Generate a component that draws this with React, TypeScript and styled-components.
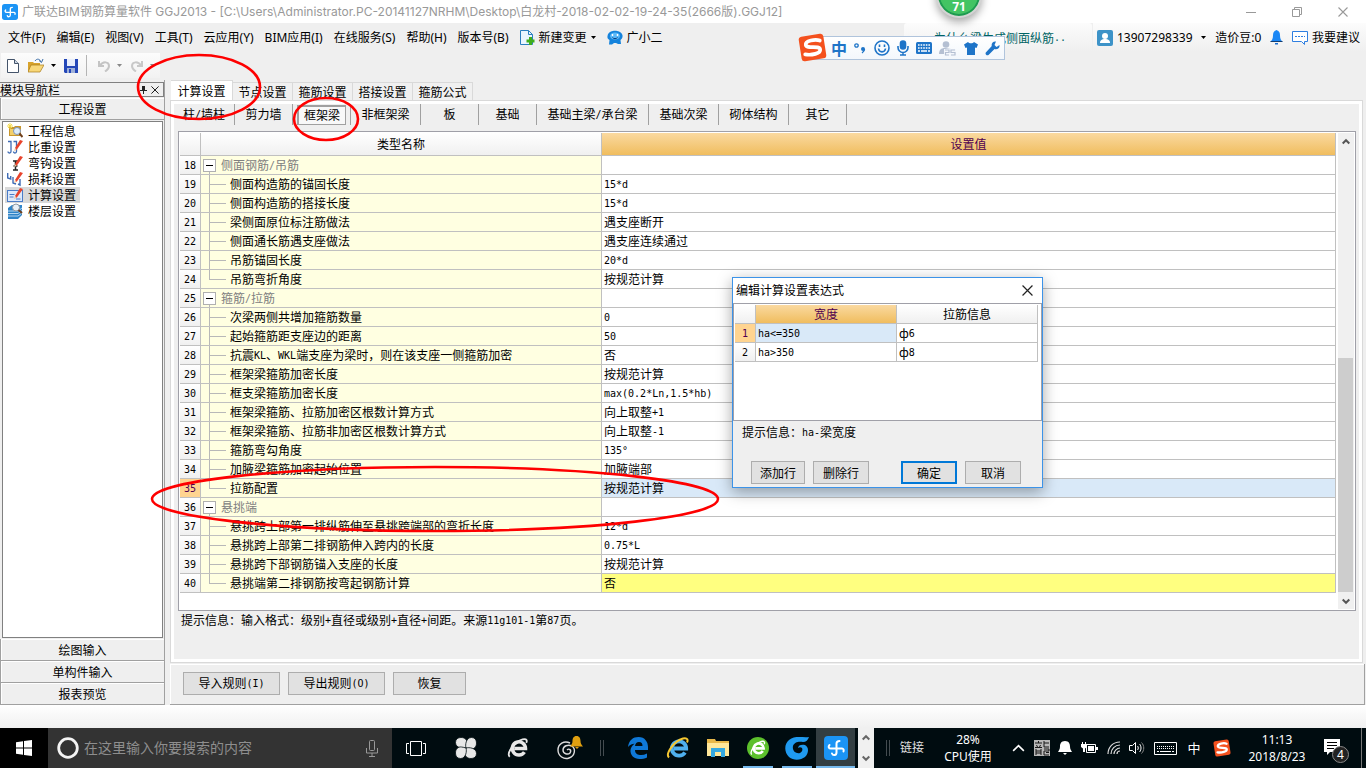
import React from 'react';
import styled, { createGlobalStyle, css } from 'styled-components';

const song = `"Noto Sans CJK SC", sans-serif`;
const ui = `"Noto Sans", "Noto Sans CJK SC", sans-serif`;

const GlobalStyle = createGlobalStyle`
  * { box-sizing: border-box; }
  body { margin: 0; background: #fff; color: #000; font: 12px/16px ${song}; }
  button, input { font: inherit; color: inherit; padding: 0; margin: 0; border: 0; background: none; }
  button { white-space: nowrap; }
  svg { display: block; flex: none; }
  h1, h2, p, ul { margin: 0; padding: 0; font-size: 12px; font-weight: 400; list-style: none; }
`;

/* Half-width characters take exactly half of a Chinese character. */
const Half = styled.span`
  font-family: "DejaVu Sans Mono", monospace;
  font-size: 10px;
  line-height: 0;
  vertical-align: 1px;
`;

const Song = ({ children }: { children: string }) => (
  <>
    {children.split(/([\x20-\x7e°]+)/).map((part, i) =>
      i % 2 ? <Half key={i}>{part}</Half> : part,
    )}
  </>
);

const Screen = styled.div`
  position: relative;
  display: flex;
  flex-direction: column;
  min-height: 100vh;
  overflow: hidden;
`;

/* ---------- title bar ---------- */
const TitleBar = styled.header`
  display: flex;
  align-items: center;
  height: 23px;
  padding-left: 2px;
  background: #fff;
  color: #999;
  font-family: Inter, "Noto Sans CJK SC", sans-serif;
`;
const Title = styled.h1`
  flex: 1;
  margin-left: 4px;
  white-space: nowrap;
`;
const WindowButton = styled.button`
  display: flex;
  align-items: center;
  justify-content: center;
  width: 46px;
  height: 20px;
`;

/* ---------- menu ---------- */
const MenuBar = styled.nav`
  display: flex;
  align-items: stretch;
  height: 29px;
  padding-left: 8px;
  background: #efefef;
  font-family: ${ui};
`;
const MenuGroup = styled.div`
  display: flex;
  flex: 1;
  align-items: center;
  gap: 11px;
`;
const MenuItem = styled.button`
  display: flex;
  align-items: center;
  gap: 4px;
`;
const Ticker = styled.a`
  display: flex;
  align-items: center;
  width: 188px;
  padding-left: 30px;
  border-radius: 3px 3px 0 0;
  background: linear-gradient(#fcfcfc, #efefef);
  color: #006464;
  font-family: ${song};
  text-decoration: none;
  white-space: nowrap;
`;
const Account = styled.div`
  display: flex;
  align-items: center;
  justify-content: space-between;
  width: 273px;
  margin-left: 1px;
  padding: 0 6px 0 4px;
  background: linear-gradient(#fcfcfc, #efefef);
`;

/* ---------- tool bar ---------- */
const ToolRow = styled.div`
  height: 28px;
  padding: 1px 0 0 1px;
  background: #efefef;
`;
const ToolBar = styled.div`
  display: flex;
  align-items: center;
  width: 159px;
  height: 25px;
  padding-left: 4px;
  background: linear-gradient(#fcfcfc, #f2f2f2);
`;
const ToolButton = styled.button<{ $w: number }>`
  display: flex;
  align-items: center;
  justify-content: center;
  width: ${(p) => p.$w}px;
  height: 22px;
`;
const ToolRule = styled.span`
  width: 1px;
  height: 21px;
  margin: 0 4px 0 0;
  background: #b4b4b4;
`;

/* ---------- work area ---------- */
const Work = styled.div`
  display: flex;
  flex: 1;
  background: #efefef;
`;
const Sidebar = styled.aside`
  display: flex;
  flex-direction: column;
  width: 165px;
  padding-top: 2px;
  border-right: 1px solid #a0a0a0;
`;
const SideHead = styled.div`
  display: flex;
  align-items: center;
  height: 15px;
  border: 1px solid #808080;
  border-left: 0;
  margin-bottom: 1px;
`;
const SideTitle = styled.h2`
  flex: 1;
`;
const SideClose = styled.button`
  width: 16px;
  height: 13px;
  display: flex;
  align-items: center;
  justify-content: flex-end;
  padding-right: 4px;
`;
const SideButton = styled.button`
  height: 22px;
  border: 1px solid #a0a0a0;
  border-width: 0 0 1px 1px;
  box-shadow: inset 1px 1px 0 #fff;
`;
const SideList = styled.ul`
  flex: 1;
  margin: 1px 1px 1px 2px;
  padding: 1px 2px;
  border: 1px solid #808080;
  background: #fff;
`;
const SideItem = styled.li<{ $on: boolean }>`
  width: 75px;
  background: ${(p) => (p.$on ? '#d9d9d9' : 'none')};
`;
const SideLink = styled.a`
  display: flex;
  align-items: center;
  gap: 5px;
  height: 16px;
  padding-left: 2px;
  color: #000;
  text-decoration: none;
  white-space: nowrap;
`;

const Content = styled.main`
  display: flex;
  flex: 1;
  flex-direction: column;
  min-width: 0;
  margin-left: 5px;
`;
const Tabs = styled.div`
  display: flex;
  align-items: flex-end;
  height: 20px;
  padding-left: 1px;
`;
const Tab = styled.button<{ $on: boolean }>`
  width: ${(p) => (p.$on ? 62 : 60)}px;
  height: ${(p) => (p.$on ? 20 : 18)}px;
  border: 1px solid #d9d9d9;
  border-width: 1px 1px 0 0;
  background: ${(p) => (p.$on ? '#fff' : '#f0f0f0')};
`;
const Panel = styled.section`
  display: flex;
  flex: 1;
  flex-direction: column;
  margin-right: 3px;
  border: 1px solid #d9d9d9;
  box-shadow: inset 0 0 0 3px #fff;
  padding: 3px 6px 3px 3px;
`;
const SubTabs = styled.div`
  display: flex;
  height: 21px;
`;
const SubTab = styled.button<{ $w: number; $on?: boolean }>`
  width: ${(p) => p.$w}px;
  padding: ${(p) => (p.$on ? '0 4px' : '0 0 2px')};
  border-right: 1px solid #a0a0a0;
`;
const Pressed = styled.span`
  display: block;
  height: 20px;
  border: 1px solid #a0a0a0;
  border-width: 2px 1px 1px 2px;
  background: #f8f8f8;
  line-height: 16px;
`;
const GridFrame = styled.div`
  display: flex;
  flex: 1;
  margin: 6px 0 0 4px;
  padding: 1px;
  border: 1px solid #a0a0a8;
  background: #fff;
`;
const GridBody = styled.div`
  flex: 1;
  min-width: 0;
`;
const Hint = styled.p`
  height: 48px;
  padding: 1px 0 0 7px;
`;

const Table = styled.table`
  width: 100%;
  border-collapse: separate;
  border-spacing: 0;
  table-layout: fixed;
`;
const cell = css`
  height: 19px;
  padding: 0;
  border: 1px solid #c0c0c0;
  border-width: 0 1px 1px 0;
  font-weight: 400;
  line-height: 18px;
  text-align: left;
  white-space: nowrap;
`;
const HeadCell = styled.th<{ $hot?: boolean; $h: number }>`
  ${cell}
  height: ${(p) => p.$h}px;
  background: ${(p) =>
    p.$hot ? 'linear-gradient(#fad9a0, #f0bd5e)' : 'linear-gradient(#fff, #f0f0f0)'};
  color: ${(p) => (p.$hot ? '#500050' : '#000')};
  text-align: center;
`;
const NumCell = styled.th<{ $on?: boolean }>`
  ${cell}
  background: ${(p) => (p.$on ? '#ffd490' : 'linear-gradient(#fff, #f0f0f0)')};
  color: ${(p) => (p.$on ? '#500050' : '#000')};
  text-align: center;
`;
const NameCell = styled.td`
  ${cell}
  background: #ffffe1;
`;
const ValueCell = styled.td<{ $bg?: string }>`
  ${cell}
  padding-left: 2px;
  background: ${(p) => p.$bg || '#fff'};
`;
const line = 'linear-gradient(#b8b8b8, #b8b8b8)';
const Leaf = styled.div<{ $last: boolean }>`
  height: 18px;
  padding-left: 29px;
  background:
    ${line} 8px 0 / 1px ${(p) => (p.$last ? '9px' : '100%')} no-repeat,
    ${line} 8px 9px / 17px 1px no-repeat;
`;
const Group = styled.div`
  display: flex;
  align-items: center;
  gap: 5px;
  height: 18px;
  padding-left: 2px;
  background: ${line} 8px 100% / 1px 4px no-repeat;
  color: #808080;
`;
const Toggle = styled.button`
  display: flex;
  align-items: center;
  justify-content: center;
  width: 13px;
  height: 13px;
  border: 1px solid #b0b0b0;
  background: #fff;
`;

const ScrollTrack = styled.div`
  display: flex;
  flex-direction: column;
  width: 16px;
  margin-left: 2px;
  background: #f0f0f0;
`;
const ScrollArrow = styled.button`
  display: flex;
  align-items: center;
  justify-content: center;
  height: 17px;
  width: 15px;
`;
const ScrollSpace = styled.div`
  flex: 208;
`;
const ScrollThumb = styled.div`
  flex: 235;
  width: 15px;
  background: #cdcdcd;
`;

const Actions = styled.div`
  display: flex;
  align-items: center;
  gap: 8px;
  height: 41px;
  margin: 1px 1px 0 0;
  padding: 0 0 2px 13px;
  border: 1px solid #a0a0a0;
  border-width: 0 1px 1px 0;
  box-shadow: inset 1px 1px 0 #fff;
`;
const PushButton = styled.button<{ $w: number; $primary?: boolean }>`
  width: ${(p) => p.$w}px;
  height: 23px;
  border: ${(p) => (p.$primary ? '2px solid #0078d7' : '1px solid #adadad')};
  background: #e1e1e1;
`;
const DeskStrip = styled.div`
  height: 23px;
  background: linear-gradient(#fff, #f0f0f0);
`;

/* ---------- dialog ---------- */
const Dialog = styled.section`
  position: absolute;
  top: 277px;
  left: 732px;
  width: 311px;
  border: 1px solid #3c93e8;
  background: #efefef;
  box-shadow: 0 4px 14px rgba(0, 0, 0, 0.35);
`;
const DialogHead = styled.div`
  display: flex;
  align-items: center;
  justify-content: space-between;
  height: 25px;
  padding: 0 9px 0 3px;
  background: #fff;
  font-family: ${ui};
`;
const DialogGrid = styled.div`
  height: 118px;
  padding: 1px 3px 0 1px;
  border: 1px solid #a0a0a8;
  background: #fff;
`;
const DialogHint = styled.p`
  padding: 3px 9px 0;
`;
const DialogActions = styled.div`
  display: flex;
  gap: 8px;
  padding: 21px 18px 3px;
`;
const Gap = styled.span`
  width: 16px;
`;

/* ---------- floating things ---------- */
const ImeBar = styled.div`
  position: absolute;
  top: 36px;
  left: 812px;
  display: flex;
  align-items: center;
  justify-content: space-between;
  width: 193px;
  height: 24px;
  padding: 0 4px 0 18px;
  border: 1px solid #b0c4dc;
  background: linear-gradient(#fff, #f3f7fc);
  color: #1e74c8;
`;
const ImeLogo = styled.div`
  position: absolute;
  top: -4px;
  left: -15px;
`;
const ImeMode = styled.span`
  font-size: 16px;
  font-weight: 700;
`;
const Ball = styled.div`
  position: absolute;
  top: -28px;
  left: 936px;
  width: 46px;
  height: 46px;
  padding-top: 27px;
  border: 2px solid #d4d4d4;
  border-radius: 50%;
  background: #43c463;
  box-shadow: inset 0 0 0 2px #1e9a50, 0 4px 8px rgba(0, 0, 0, 0.35);
  color: #fff;
  font: 700 12px/12px ${ui};
  text-align: center;
`;
const Marks = styled.svg`
  position: absolute;
  top: 0;
  left: 0;
  pointer-events: none;
`;

/* ---------- task bar ---------- */
const TaskBar = styled.footer`
  display: flex;
  height: 40px;
  background: #000c10;
  color: #fff;
  font-family: ${ui};
`;
const TaskCell = styled.button<{ $w: number; $running?: boolean; $active?: boolean }>`
  display: flex;
  align-items: center;
  justify-content: center;
  width: ${(p) => p.$w}px;
  background: ${(p) => (p.$active ? '#333e42' : 'none')};
  box-shadow: ${(p) =>
    p.$active ? 'inset 0 -2px 0 #76b9ed' : 'none'};
  ${(p) =>
    p.$running &&
    css`
      background: linear-gradient(#76b9ed, #76b9ed) 5px 100% / 30px 2px no-repeat;
    `}
`;
const Start = styled(TaskCell)`
  background: #000;
`;
const Search = styled.label`
  display: flex;
  align-items: center;
  width: 344px;
  padding: 0 14px 0 8px;
  background: #333;
`;
const SearchInput = styled.input`
  flex: 1;
  min-width: 0;
  margin-left: 4px;
  font-size: 14px;
  line-height: 20px;
  &::placeholder { color: #8e8e8e; opacity: 1; }
`;
const Grip = styled.span`
  width: 4px;
  height: 16px;
  margin: 12px 14px 0 4px;
  border: 1px solid #444c50;
  border-width: 0 1px;
`;
const Pager = styled.div`
  display: flex;
  flex-direction: column;
  align-items: center;
  justify-content: space-around;
  width: 16px;
  margin: 0 8px 0 3px;
  background: #f0f0f0;
`;
const Links = styled.span`
  margin-left: -4px;
  line-height: 40px;
  color: #e0e0e0;
`;
const Stack = styled.div<{ $w: number }>`
  width: ${(p) => p.$w}px;
  padding-top: 3px;
  line-height: 17px;
  text-align: center;
  white-space: nowrap;
`;
const Tray = styled.div`
  display: flex;
  margin-left: auto;
`;
const Lang = styled.span`
  font-size: 13px;
`;
const Notice = styled.button`
  position: relative;
  width: 44px;
  padding: 0 0 2px 8px;
`;
const Badge = styled.span`
  position: absolute;
  top: 18px;
  left: 16px;
  width: 17px;
  height: 17px;
  border: 1px solid #888;
  border-radius: 50%;
  background: #222;
  line-height: 15px;
`;
const Peek = styled.span`
  width: 5px;
  margin-left: 1px;
  border-left: 1px solid #777;
`;

/* ---------- icons ---------- */
const AppIcon = ({ size }: { size: number }) => (
  <svg width={size} height={size} viewBox="0 0 24 24">
    <rect width="24" height="24" rx="4" fill="#1b94f5" />
    <path
      d="M12.500 12V7.500c0-1.500 1-2.500 3-2.500M12.500 12v4.500c0 3-3.500 3.500-4.500 1M12.500 12.500H18c1.500 0 2 1.500 1.500 3M12.500 12.500H7c-2.500 0-3-2-1.500-3.500"
      fill="none" stroke="#fff" strokeWidth="2" strokeLinecap="round"
    />
  </svg>
);
const Caret = ({ color = '#000' }: { color?: string }) => (
  <svg width="5" height="3" viewBox="0 0 5 3"><path d="M0 0h5L2.500 3z" fill={color} /></svg>
);
const Cross = ({ size, color }: { size: number; color: string }) => (
  <svg width={size} height={size} viewBox="0 0 10 10">
    <path d="M.5.5l9 9M9.500.5l-9 9" stroke={color} strokeWidth="1.100" />
  </svg>
);
const Chevron = ({ up, color, size = 8 }: { up?: boolean; color: string; size?: number }) => (
  <svg width={size} height={size} viewBox="0 0 8 8">
    <path d={up ? 'M.7 5.500L4 2.200l3.300 3.300' : 'M.7 2.500L4 5.800l3.300-3.300'} fill="none" stroke={color} strokeWidth={size > 8 ? 1 : 2} />
  </svg>
);
const SogouIcon = ({ size }: { size: number }) => (
  <svg width={size} height={size} viewBox="0 0 28 28">
    <g transform="rotate(-9 14 14)">
      <rect x="2" y="2" width="24" height="24" rx="3" fill="#f4511e" />
      <path d="M22 8.500C18 6 8 6.500 8 10.500c0 4.500 13 2 13 6.500 0 4-9 4.500-15 2.500" fill="none" stroke="#fff" strokeWidth="3.600" strokeLinecap="round" />
    </g>
  </svg>
);
const Pencil = () => (
  <g>
    <path d="M8 9l5-8 3 1-6.500 9z" fill="#e8432c" />
    <path d="M8 9l-1 3 2.500-1z" fill="#f2c9a0" />
  </g>
);
const SideIcon = ({ kind }: { kind: number }) => (
  <svg width="16" height="16" viewBox="0 0 16 16">
    {kind === 0 && (<>
      <path d="M2 4h5l1-1h6v10H2z" fill="#c8962c" /><path d="M3 6h9v6H3z" fill="#f2cf6a" />
      <path d="M3 0v6M0 3h6M1 1l4 4M5 1L1 5" stroke="#f5dc50" />
      <circle cx="10" cy="8" r="3.500" fill="#dcecfa" stroke="#8093b0" /><path d="M12.500 10.500L15.500 14" stroke="#70401c" strokeWidth="2" />
    </>)}
    {kind === 1 && (<>
      <path d="M1 2.500h3v10c0 2-3 2-3 0M6.500 2.500h3v10c0 2-3 2-3 0" fill="none" stroke="#3f6bb4" strokeWidth="1.300" /><Pencil />
    </>)}
    {kind === 2 && (<>
      <path d="M6 6h5M8.500 6v9M6 15h5M6.500 11h4" stroke="#222" strokeWidth="1.500" /><Pencil />
    </>)}
    {kind === 3 && (<>
      <path d="M.7 2v5l3 1v-3M6 6v6l3 1M13 8v6l-2-1" fill="none" stroke="#3f6bb4" strokeWidth="1.400" /><Pencil />
    </>)}
    {kind === 4 && (<>
      <rect x=".5" y="3.500" width="15" height="11" fill="#dce9fb" stroke="#4a7cc8" /><path d="M2.500 7.500h5M2.500 10h4M9 12h4.500" stroke="#4a7cc8" /><Pencil />
    </>)}
    {kind === 5 && (<>
      <path d="M1 5l4-3h10v10l-4 4H1z" fill="#2f84c8" /><path d="M1 8h10l4-3M1 10.500h10l4-3M1 13h10l4-3" fill="none" stroke="#d8ecfa" strokeWidth=".8" />
      <circle cx="9" cy="4.500" r="3.500" fill="#e8f0f8" stroke="#9098a0" /><path d="M11.500 7L15 10" stroke="#70401c" strokeWidth="2" />
    </>)}
  </svg>
);
const IeShape = ({ color, ring }: { color: string; ring?: string }) => (
  <g fill="none">
    <path d="M19 16.500a7.200 7.200 0 1 1 1.200-4H8" stroke={color} strokeWidth="3.800" />
    <path d="M3 21.500C-1 18 8 5 17 2.500c5-1.200 5 2 4 4" stroke={ring || color} strokeWidth="2" />
  </g>
);

/* ---------- data ---------- */
const menus = ['文件(F)', '编辑(E)', '视图(V)', '工具(T)', '云应用(Y)', 'BIM应用(I)', '在线服务(S)', '帮助(H)', '版本号(B)'];
const sideItems = ['工程信息', '比重设置', '弯钩设置', '损耗设置', '计算设置', '楼层设置'];
const tabs = ['计算设置', '节点设置', '箍筋设置', '搭接设置', '箍筋公式'];
const subTabs: [string, number][] = [
  ['柱/墙柱', 61], ['剪力墙', 58], ['框架梁', 58], ['非框架梁', 70], ['板', 58], ['基础', 58],
  ['基础主梁/承台梁', 112], ['基础次梁', 70], ['砌体结构', 70], ['其它', 58],
];
type Row = { name: string; value?: string; group?: boolean };
const rows: Row[] = [
  { name: '侧面钢筋/吊筋', group: true },
  { name: '侧面构造筋的锚固长度', value: '15*d' },
  { name: '侧面构造筋的搭接长度', value: '15*d' },
  { name: '梁侧面原位标注筋做法', value: '遇支座断开' },
  { name: '侧面通长筋遇支座做法', value: '遇支座连续通过' },
  { name: '吊筋锚固长度', value: '20*d' },
  { name: '吊筋弯折角度', value: '按规范计算' },
  { name: '箍筋/拉筋', group: true },
  { name: '次梁两侧共增加箍筋数量', value: '0' },
  { name: '起始箍筋距支座边的距离', value: '50' },
  { name: '抗震KL、WKL端支座为梁时，则在该支座一侧箍筋加密', value: '否' },
  { name: '框架梁箍筋加密长度', value: '按规范计算' },
  { name: '框支梁箍筋加密长度', value: 'max(0.2*Ln,1.5*hb)' },
  { name: '框架梁箍筋、拉筋加密区根数计算方式', value: '向上取整+1' },
  { name: '框架梁箍筋、拉筋非加密区根数计算方式', value: '向上取整-1' },
  { name: '箍筋弯勾角度', value: '135°' },
  { name: '加腋梁箍筋加密起始位置', value: '加腋端部' },
  { name: '拉筋配置', value: '按规范计算' },
  { name: '悬挑端', group: true },
  { name: '悬挑跨上部第一排纵筋伸至悬挑跨端部的弯折长度', value: '12*d' },
  { name: '悬挑跨上部第二排钢筋伸入跨内的长度', value: '0.75*L' },
  { name: '悬挑跨下部钢筋锚入支座的长度', value: '按规范计算' },
  { name: '悬挑端第二排钢筋按弯起钢筋计算', value: '否' },
];
const FIRST_ROW = 18;
const valueColor: Record<number, string> = { 35: '#d9e9f8', 40: '#ffff80' };

const SettingsTable = () => (
  <Table>
    <colgroup><col style={{ width: 21 }} /><col style={{ width: 401 }} /><col /></colgroup>
    <thead>
      <tr>
        <HeadCell $h={23} aria-label="行号" />
        <HeadCell $h={23}>类型名称</HeadCell>
        <HeadCell $h={23} $hot>设置值</HeadCell>
      </tr>
    </thead>
    <tbody>
      {rows.map((row, i) => {
        const n = FIRST_ROW + i;
        const last = i === rows.length - 1 || !!rows[i + 1].group;
        return (
          <tr key={n}>
            <NumCell scope="row" $on={n === 35}><Song>{String(n)}</Song></NumCell>
            <NameCell>
              {row.group ? (
                <Group>
                  <Toggle aria-label="折叠">
                    <svg width="7" height="1" viewBox="0 0 7 1"><path d="M0 0h7v1H0z" /></svg>
                  </Toggle>
                  <span><Song>{row.name}</Song></span>
                </Group>
              ) : (
                <Leaf $last={last}><Song>{row.name}</Song></Leaf>
              )}
            </NameCell>
            <ValueCell $bg={valueColor[n]}><Song>{row.value || ''}</Song></ValueCell>
          </tr>
        );
      })}
    </tbody>
  </Table>
);

const ExpressionDialog = () => (
  <Dialog role="dialog" aria-labelledby="expr-title">
    <DialogHead>
      <h2 id="expr-title">编辑计算设置表达式</h2>
      <button aria-label="关闭"><Cross size={11} color="#222" /></button>
    </DialogHead>
    <DialogGrid>
      <Table>
        <colgroup><col style={{ width: 21 }} /><col /><col /></colgroup>
        <thead>
          <tr>
            <HeadCell $h={19} aria-label="行号" />
            <HeadCell $h={19} $hot>宽度</HeadCell>
            <HeadCell $h={19}>拉筋信息</HeadCell>
          </tr>
        </thead>
        <tbody>
          <tr>
            <NumCell scope="row" $on><Song>1</Song></NumCell>
            <ValueCell $bg="#d9e9f8"><Song>{'ha<=350'}</Song></ValueCell>
            <ValueCell><Song>ф6</Song></ValueCell>
          </tr>
          <tr>
            <NumCell scope="row"><Song>2</Song></NumCell>
            <ValueCell><Song>{'ha>350'}</Song></ValueCell>
            <ValueCell><Song>ф8</Song></ValueCell>
          </tr>
        </tbody>
      </Table>
    </DialogGrid>
    <DialogHint><Song>提示信息：ha-梁宽度</Song></DialogHint>
    <DialogActions>
      <PushButton $w={54}>添加行</PushButton>
      <PushButton $w={56}>删除行</PushButton>
      <Gap />
      <PushButton $w={56} $primary>确定</PushButton>
      <PushButton $w={56}>取消</PushButton>
    </DialogActions>
  </Dialog>
);

const ImeTools = () => (
  <ImeBar>
    <ImeLogo><SogouIcon size={29} /></ImeLogo>
    <ImeMode>中</ImeMode>
    <svg width="12" height="14" viewBox="0 0 12 14"><circle cx="2.500" cy="4.500" r="1.700" fill="none" stroke="#1e74c8" strokeWidth="1.300" /><circle cx="9" cy="8" r="2" fill="#1e74c8" /><path d="M10.500 8c0 2-1 3-2.500 4" fill="none" stroke="#1e74c8" strokeWidth="1.400" /></svg>
    <svg width="16" height="16" viewBox="0 0 16 16" fill="none" stroke="#1e74c8" strokeWidth="1.600"><circle cx="8" cy="8" r="7" /><path d="M4.500 8.500c.5 4.500 6.500 4.500 7 0M5.500 4.500v2.500M10.500 4.500v2.500" /></svg>
    <svg width="12" height="16" viewBox="0 0 12 16" fill="none" stroke="#1e74c8" strokeWidth="1.600"><rect x="3.500" y="1" width="5" height="8" rx="2.500" fill="#1e74c8" /><path d="M1 6v1.500a5 5 0 0 0 10 0V6M6 12.500V15M3 15h6" /></svg>
    <svg width="16" height="12" viewBox="0 0 16 12"><rect width="16" height="12" rx="1.500" fill="#1e74c8" /><path d="M2 3h12M2 6h12" stroke="#fff" strokeWidth="1.600" strokeDasharray="1.600 1" /><path d="M2 9h2M5 9h6M12 9h2" stroke="#fff" strokeWidth="1.600" /></svg>
    <svg width="17" height="15" viewBox="0 0 17 15"><circle cx="7" cy="3.500" r="3.300" fill="#b4bfd2" /><path d="M0 13c0-4 2-6 6-6l6 1v5z" fill="#b4bfd2" /><rect x="5" y="8" width="12" height="7" fill="#f4f7fc" /><path d="M6 9h4v2.500H6.500V14H10M16 9h-4v2.500h4V14h-4" fill="none" stroke="#b4bfd2" strokeWidth="1.200" /></svg>
    <svg width="14" height="14" viewBox="0 0 14 14"><path d="M4 1c1 1.800 5 1.800 6 0l4 2.500-1.500 3.500-1.500-.5V14H3V6.500L1.500 7 0 3.500z" fill="#1e74c8" /></svg>
    <svg width="15" height="15" viewBox="0 0 15 15"><path d="M14.500 4l-3 2-2-2 1.500-3.500C8 0 6 2.500 6.800 5L.8 11.500c-1 2 1.200 3.500 2.700 2.500l6-6c3 .8 5.500-1 5-4z" fill="#1e74c8" /></svg>
  </ImeBar>
);

const App = () => (
  <Screen>
    <GlobalStyle />
    <TitleBar>
      <AppIcon size={16} />
      <Title>广联达BIM钢筋算量软件 GGJ2013 - [C:\Users\Administrator.PC-20141127NRHM\Desktop\白龙村-2018-02-02-19-24-35(2666版).GGJ12]</Title>
      <WindowButton aria-label="最小化"><svg width="10" height="10" viewBox="0 0 10 10"><path d="M0 5.500h10" stroke="#999" /></svg></WindowButton>
      <WindowButton aria-label="还原"><svg width="10" height="10" viewBox="0 0 10 10"><path d="M.5 2.500h7v7h-7zM2.500 2.500v-2h7v7h-2" fill="none" stroke="#999" /></svg></WindowButton>
      <WindowButton aria-label="关闭"><Cross size={10} color="#999" /></WindowButton>
    </TitleBar>

    <MenuBar>
      <MenuGroup>
        {menus.map((m) => <MenuItem key={m}>{m}</MenuItem>)}
        <MenuItem>
          <svg width="15" height="17" viewBox="0 0 15 17"><path d="M.5 1.500h8l4 4v10H.5z" fill="#eaf5ff" stroke="#2b7fc0" /><path d="M8.500 1.500v4h4" fill="none" stroke="#2b7fc0" /><path d="M10.500 8v8M6.500 12h8" stroke="#3fae1c" strokeWidth="3" /></svg>
          新建变更
          <Caret />
        </MenuItem>
        <MenuItem>
          <svg width="16" height="15" viewBox="0 0 16 15"><path d="M4 1.500C6 .5 10 .5 12 1.500c2.500 1 4 3 3.500 5.500-.3 1.500-1.500 2.500-2 3l.5 4h-3L9 13H7l-2 1.500H2L2.500 10C1 9 0 8 .5 6 .8 4 2 2.300 4 1.500z" fill="#1583dc" /><ellipse cx="8" cy="6" rx="5" ry="3.500" fill="#5bb8f8" /><path d="M5.500 4v2M10.500 4v2" stroke="#fff" strokeWidth="1.400" /><path d="M5.500 7.500c1 1.500 4 1.500 5 0" stroke="#0b3f80" fill="none" /></svg>
          广小二
        </MenuItem>
      </MenuGroup>
      <Ticker href="#">为什么梁生成侧面纵筋<Half>..</Half></Ticker>
      <Account>
        <MenuItem>
          <svg width="16" height="16" viewBox="0 0 16 16"><rect width="16" height="16" rx="2" fill="#3d93c8" /><circle cx="8" cy="6" r="3" fill="#fff" /><path d="M3 13c0-3 2-4 5-4s5 1 5 4z" fill="#fff" /></svg>
          13907298339
        </MenuItem>
        <Caret />
        <span>造价豆:0</span>
        <svg width="13" height="15" viewBox="0 0 13 15"><path d="M6.500 0C9.500 1 10 3 10 5.500c0 3 1 4.500 2.500 6.500H.5C2 10 3 8.500 3 5.500 3 3 3.500 1 6.500 0z" fill="#1b87f5" /><path d="M.5 11.500h12" stroke="#123c70" /><path d="M5 13h3v1.500H5z" fill="#1b6fd0" /></svg>
        <MenuItem>
          <svg width="16" height="16" viewBox="0 0 16 16"><path d="M.5 1.500h15v10h-3v3l-3-3h-9z" fill="#fff" stroke="#2f7fe0" /><path d="M3 6.500h10" stroke="#2f7fe0" strokeDasharray="2 1" /></svg>
          我要建议
        </MenuItem>
      </Account>
    </MenuBar>

    <ToolRow>
      <ToolBar>
        <ToolButton $w={16} aria-label="新建"><svg width="12" height="14" viewBox="0 0 12 14"><path d="M.5.5h7l4 4v9H.5z" fill="#fff" stroke="#44546a" /><path d="M7.500.5v4h4" fill="#cdd8e6" stroke="#44546a" /></svg></ToolButton>
        <ToolButton $w={30} aria-label="打开"><svg width="16" height="15" viewBox="0 0 16 15"><path d="M0 4h5l1 1h6v9H0z" fill="#d8a32c" /><path d="M3 7h13l-4 7H0z" fill="#f8d778" stroke="#a87818" strokeWidth=".7" /><path d="M7 3c2-3 5-2 6 1M15 1l-1.500 3.500L11 2.500" fill="none" stroke="#3b6ea8" /></svg></ToolButton>
        <Caret />
        <ToolButton $w={30} aria-label="保存"><svg width="14" height="14" viewBox="0 0 14 14"><path d="M0 0h14v14H1l-1-1z" fill="#2447b8" /><path d="M3 0h8v7H3z" fill="#e8eefc" /><path d="M3 9h8v5H3z" fill="#9fb0d8" /><path d="M5 10h2v4H5z" fill="#2447b8" /></svg></ToolButton>
        <ToolRule />
        <ToolButton $w={26} aria-label="撤销"><svg width="13" height="12" viewBox="0 0 13 12"><path d="M1 1v5h5M2 5.500C5 1 11 1.500 11 6c0 3-2 4-4 5.500" fill="none" stroke="#c4c4c4" strokeWidth="2" /></svg></ToolButton>
        <Caret color="#888" />
        <ToolButton $w={28} aria-label="重做"><svg width="13" height="12" viewBox="0 0 13 12"><path d="M12 1v5H7M11 5.500C8 1 2 1.500 2 6c0 3 2 4 4 5.500" fill="none" stroke="#c8c8c8" strokeWidth="2" /></svg></ToolButton>
        <Caret color="#888" />
      </ToolBar>
    </ToolRow>

    <Work>
      <Sidebar>
        <SideHead>
          <SideTitle>模块导航栏</SideTitle>
          <svg width="7" height="8" viewBox="0 0 7 8"><path d="M2 0h3v4H2zM0 4h7v1H0zM3 5h1v3H3z" fill="#222" /></svg>
          <SideClose aria-label="关闭"><Cross size={8} color="#000" /></SideClose>
        </SideHead>
        <SideButton>工程设置</SideButton>
        <SideList>
          {sideItems.map((s, i) => (
            <SideItem key={s} $on={i === 4}><SideLink href="#"><SideIcon kind={i} />{s}</SideLink></SideItem>
          ))}
        </SideList>
        <SideButton>绘图输入</SideButton>
        <SideButton>单构件输入</SideButton>
        <SideButton>报表预览</SideButton>
      </Sidebar>

      <Content>
        <Tabs role="tablist">
          {tabs.map((t, i) => <Tab key={t} role="tab" $on={i === 0}>{t}</Tab>)}
        </Tabs>
        <Panel>
          <SubTabs>
            {subTabs.map(([t, w]) => (
              <SubTab key={t} $w={w} $on={t === '框架梁'}>
                {t === '框架梁' ? <Pressed>{t}</Pressed> : <Song>{t}</Song>}
              </SubTab>
            ))}
          </SubTabs>
          <GridFrame>
            <GridBody><SettingsTable /></GridBody>
            <ScrollTrack>
              <ScrollArrow aria-label="向上滚动"><Chevron up color="#555" /></ScrollArrow>
              <ScrollSpace />
              <ScrollThumb />
              <ScrollArrow aria-label="向下滚动"><Chevron color="#555" /></ScrollArrow>
            </ScrollTrack>
          </GridFrame>
          <Hint><Song>提示信息：输入格式：级别+直径或级别+直径+间距。来源11g101-1第87页。</Song></Hint>
        </Panel>
        <Actions>
          <PushButton $w={97}><Song>导入规则(I)</Song></PushButton>
          <PushButton $w={97}><Song>导出规则(O)</Song></PushButton>
          <PushButton $w={73}>恢复</PushButton>
        </Actions>
      </Content>
    </Work>
    <DeskStrip />

    <TaskBar>
      <Start $w={48} aria-label="开始"><svg width="16" height="16" viewBox="0 0 16 16"><path d="M0 2.200L7 1.200v6.300H0zM8 1.100L16 0v7.500H8zM0 8.500h7v6.300l-7-1zM8 8.500h8V16l-8-1.100z" fill="#fff" /></svg></Start>
      <Search>
        <svg width="24" height="24" viewBox="0 0 24 24"><circle cx="12" cy="12" r="9.300" fill="none" stroke="#f4f4f4" strokeWidth="2.800" /></svg>
        <SearchInput type="text" aria-label="搜索" placeholder="在这里输入你要搜索的内容" />
        <svg width="12" height="17" viewBox="0 0 12 17" fill="none" stroke="#999"><rect x="3.500" y=".5" width="5" height="10" rx="1" /><path d="M.5 8v5h11V8M6 13v3.500M3 16.500h6" /></svg>
      </Search>
      <TaskCell $w={48} aria-label="任务视图"><svg width="20" height="15" viewBox="0 0 20 15" fill="none" stroke="#fff"><path d="M4.500.5h11v14h-11zM3 2.500H.5v10H3M17 2.500h2.500v10H17" /></svg></TaskCell>
      <TaskCell $w={52} aria-label="四叶草">
        <svg width="22" height="22" viewBox="0 0 22 22">
          <g fill="#e8e8e8">
            {[0, 90, 180, 270].map((a) => (
              <path key={a} transform={`rotate(${a} 11 11)`} d="M11 11C8 12 .5 11 .5 5.500.5 2 3 .5 6 .5c4 0 6.500 2.500 6 6-.2 1.500-.5 3-1 4.500z" stroke="#000c10" strokeWidth=".8" />
            ))}
          </g>
        </svg>
      </TaskCell>
      <TaskCell $w={52} aria-label="浏览器"><svg width="22" height="24" viewBox="0 0 24 24"><IeShape color="#e8e8e8" /></svg></TaskCell>
      <TaskCell $w={52} aria-label="提醒">
        <svg width="28" height="26" viewBox="0 0 28 26"><path d="M14 8C8 5 2 9 2 15s6 10 11 8c6-2 7-9 3-12-4-2-9 0-9 4s5 5 7 3c2-3-1-5-3-3" fill="none" stroke="#ddd" strokeWidth="1.400" /><path d="M20.500 1c3 0 4 2.500 4 5 0 2.500 1 3.500 2.500 5.500H14c1.500-2 2.500-3 2.500-5.500s1-5 4-5z" fill="#e0a010" /><path d="M19 12h4l-2 2z" fill="#e0a010" /></svg>
      </TaskCell>
      <Grip />
      <TaskCell $w={40} aria-label="Edge"><svg width="20" height="22" viewBox="0 0 20 22"><path d="M0 10C1 3 5 0 10.500 0 17 0 20 5 20 10v3H7c0 4 3 5 6 5 2 0 4-.5 6-1.500v4C17 21.500 14 22 11.500 22 6 22 2 18 2.500 13c.3-2.500 2-5 4-6.300C5 6.500 2 7.500 0 10zm7-1h7.500c0-2.500-1-4-3.500-4S7.500 6.500 7 9z" fill="#0f78d7" /></svg></TaskCell>
      <TaskCell $w={40} aria-label="Internet Explorer"><svg width="24" height="24" viewBox="0 0 24 24"><IeShape color="#4fb0ee" ring="#f6c832" /></svg></TaskCell>
      <TaskCell $w={40} aria-label="文件资源管理器"><svg width="22" height="18" viewBox="0 0 22 18"><path d="M0 0h8l1 2h13v15H0z" fill="#e8b84a" /><path d="M0 4h22v13H0z" fill="#ffe79a" /><path d="M4 9h14v9h-4v-5H8v5H4z" fill="#35a8e0" /></svg></TaskCell>
      <TaskCell $w={39} $running aria-label="360浏览器"><svg width="22" height="22" viewBox="0 0 24 24"><circle cx="12" cy="12" r="12" fill="#5cc02c" /><g transform="translate(3 3) scale(.75)"><IeShape color="#fff" /></g></svg></TaskCell>
      <TaskCell $w={39} $running aria-label="广联达"><svg width="24" height="24" viewBox="0 0 24 24"><path d="M24 1c-1 3-3 5-6 5-4-1-9 0-10 4-1 5 3 8 7 7 2-1 3-3 2-5-1-1-3-1-4 0 0-3 4-4 7-3 4 2 4 8 0 12-4 3-11 4-16 0C-1 16-1 8 4 4 10-1 18 2 24 1z" fill="#1f9af0" /></svg></TaskCell>
      <TaskCell $w={39} $active aria-label="钢筋算量"><AppIcon size={24} /></TaskCell>
      <Pager><Chevron up color="#666" /><Chevron color="#666" /></Pager>
      <Grip />
      <Links>链接</Links>
      <Tray>
        <Stack $w={74}>28%<br />CPU使用</Stack>
        <TaskCell $w={26} aria-label="显示隐藏的图标"><Chevron up color="#fff" size={13} /></TaskCell>
        <TaskCell $w={22} aria-label="输入法"><svg width="16" height="16" viewBox="0 0 16 16"><rect width="16" height="16" fill="#b8b8b8" /><path d="M1 3h7M4.500 1v2M2.500 5l1 2M6.500 5l-1 2M1 7.500h7M2 9v6M7 9v6M2 11h5M2 13h5M10 1v6h5M10 3h5M10 9h5v2h-5v4h5M12 12.500h3" stroke="#181818" fill="none" /></svg></TaskCell>
        <TaskCell $w={24} aria-label="通知"><svg width="14" height="14" viewBox="0 0 14 14"><path d="M7 0c4 0 5 3 5 5.500S13 9 14 11H0c1-2 2-3 2-5.500S3 0 7 0zM5 12h4l-2 2z" fill="#fff" /></svg></TaskCell>
        <TaskCell $w={25} aria-label="电池"><svg width="17" height="14" viewBox="0 0 17 14"><path d="M5.500 3.500h9v8h-9z" fill="none" stroke="#fff" /><path d="M7 5h6v5H7zM15 6h2v3h-2zM1 1h1v3H1zM4 1h1v3H4zM0 3h6v3L4 7.500V11H2V7.500L0 6z" fill="#fff" /></svg></TaskCell>
        <TaskCell $w={24} aria-label="网络"><svg width="14" height="14" viewBox="0 0 14 14" fill="none" stroke="#ddd" strokeWidth="1.200"><path d="M1 13C1 6 6 1 13 1M4 13c0-5 4-9 9-9M7 13c0-3 3-6 6-6M10 13c0-2 1-3 3-3" /></svg></TaskCell>
        <TaskCell $w={22} aria-label="音量"><svg width="16" height="14" viewBox="0 0 16 14" fill="none" stroke="#fff"><path d="M.5 4.500h3L6.500 1.500v11L3.500 9.500h-3zM8.500 5c1 1 1 3 0 4M10.500 3c2 2 2 6 0 8" /><path d="M12.500 1.500c3 3 3 8 0 11" stroke="#888" /></svg></TaskCell>
        <TaskCell $w={34} aria-label="触摸键盘"><svg width="23" height="13" viewBox="0 0 23 13" fill="none" stroke="#fff"><path d="M.5.5h22v12H.5z" /><path d="M3 4.500h17M3 6.500h17" strokeDasharray="1 1" /><path d="M3 9.500h2M6 9.500h11M18 9.500h2" /></svg></TaskCell>
        <TaskCell $w={24}><Lang>中</Lang></TaskCell>
        <TaskCell $w={32} aria-label="搜狗输入法"><SogouIcon size={18} /></TaskCell>
        <Stack $w={78}>11:13<br />2018/8/23</Stack>
        <Notice aria-label="操作中心">
          <svg width="16" height="16" viewBox="0 0 16 16"><path d="M0 0h16v13H6l-3 3v-3H0z" fill="#fff" /><path d="M3 3.500h10M3 6.500h10M3 9.500h7" stroke="#000" /></svg>
          <Badge>4</Badge>
        </Notice>
        <Peek />
      </Tray>
    </TaskBar>

    <Ball>71</Ball>
    <ImeTools />
    <ExpressionDialog />
    <Marks width="740" height="560" viewBox="0 0 740 560" fill="none" stroke="#fe0000" strokeWidth="2.600" aria-hidden="true">
      <ellipse cx="199" cy="87" rx="61" ry="32" />
      <ellipse cx="326" cy="119" rx="32" ry="21" />
      <ellipse cx="435" cy="499" rx="283" ry="32" />
    </Marks>
  </Screen>
);

export default App;
